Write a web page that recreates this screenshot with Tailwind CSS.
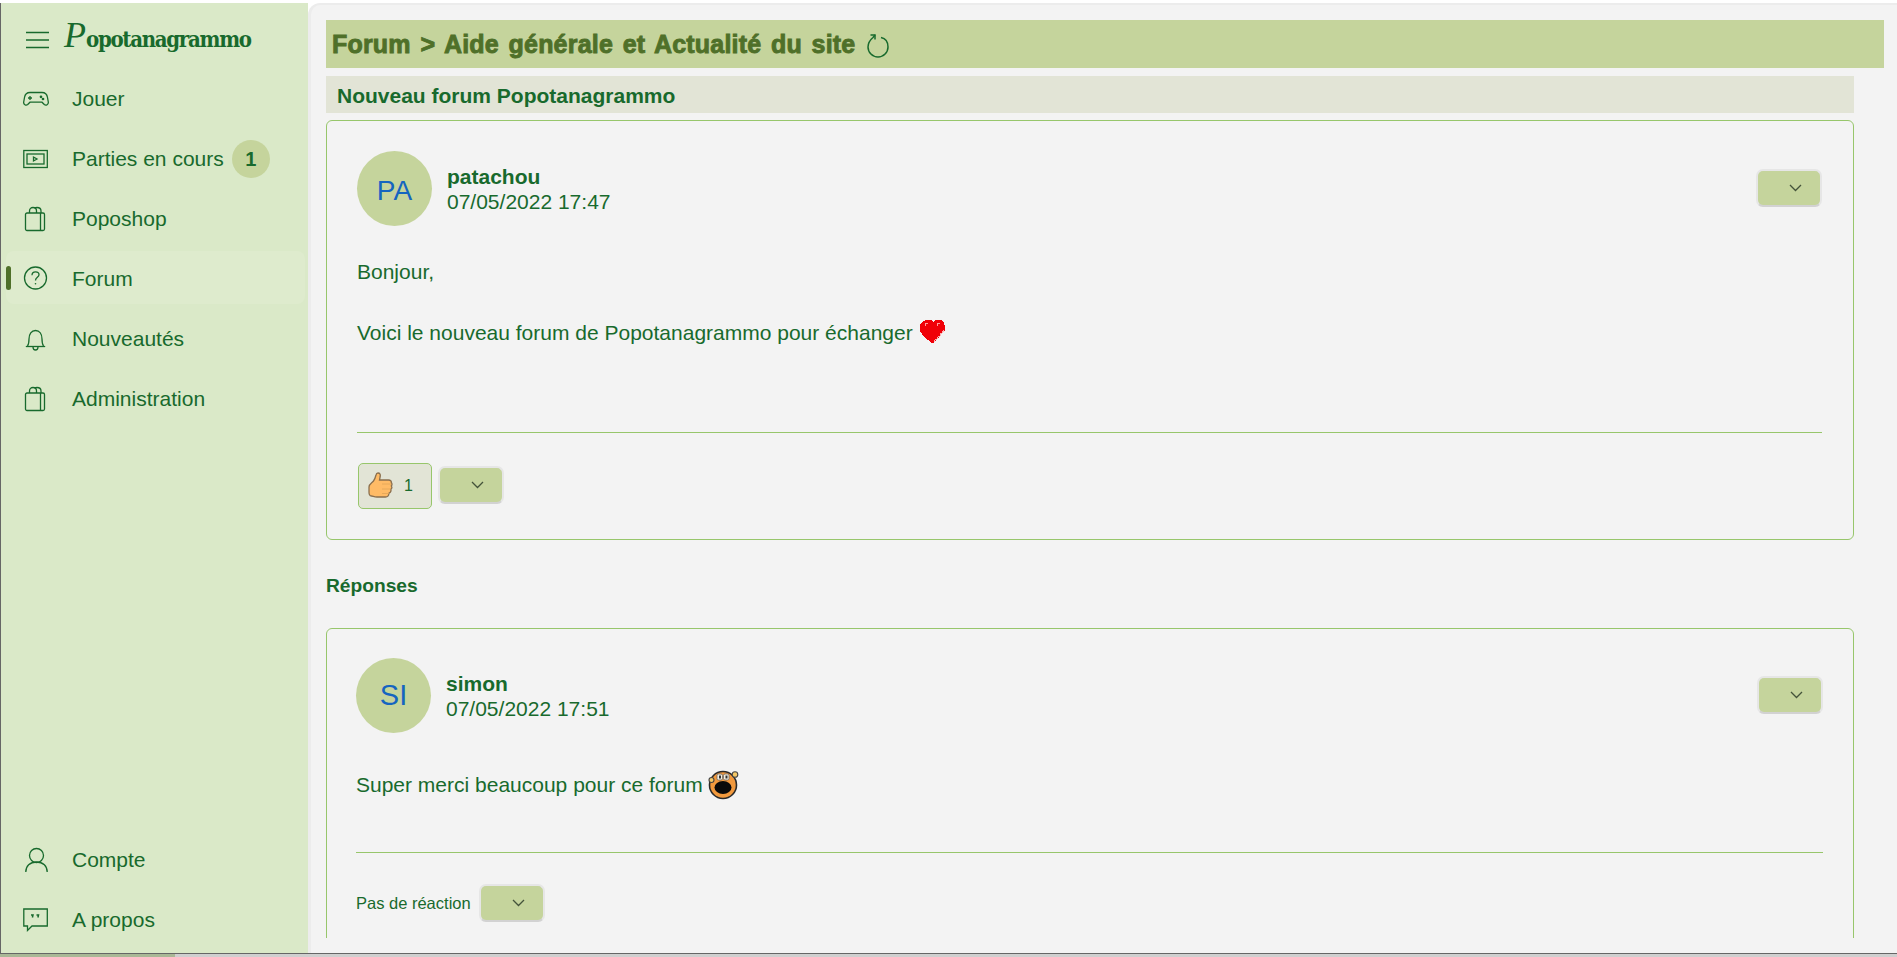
<!DOCTYPE html>
<html lang="fr">
<head>
<meta charset="utf-8">
<title>Forum</title>
<script src="https://cdn.jsdelivr.net/npm/@tailwindcss/browser@4"></script>
</head>
<body class="bg-white">
<div class="h-[957px] w-[1897px] overflow-hidden flex flex-col font-['Liberation_Sans',Arial,sans-serif] text-[#186a2d] text-[21px]">
  <div class="h-[3px] shrink-0 bg-white ml-px"></div>
  <div class="flex-1 min-h-0 flex border-l border-[#666]">
    <!-- Sidebar -->
    <aside class="w-[307px] shrink-0 bg-[#dae9c8] flex flex-col pb-[3px]">
      <div class="h-[66px] flex items-center pl-[25px] shrink-0">
        <svg class="w-[23px] h-[18px] mt-[7px]" viewBox="0 0 23 18" fill="none" stroke="#186a2d" stroke-width="1.3"><path d="M0 1.5h23M0 9h23M0 16.5h23"/></svg>
        <div class="ml-[15px] flex items-baseline mt-[2px]">
          <span class="font-['Liberation_Serif',serif] italic text-[36px] leading-[40px]">P</span><span class="font-['DejaVu_Serif',serif] font-stretch-condensed font-bold text-[22px] leading-[40px] tracking-[-1.300px]">opotanagrammo</span>
        </div>
      </div>
      <a class="h-[60px] flex items-center pl-[22px] shrink-0">
        <svg class="w-[26px] h-[26px] mr-[23px]" viewBox="0 0 26 26" fill="none" stroke="#186a2d" stroke-width="1.3"><path d="M7 6.500h12c3 0 5 2 5.500 5l.8 4.500c.4 2.500-2.300 4-4 2.500l-2.300-2.300H7l-2.300 2.300c-1.700 1.500-4.400 0-4-2.500l.8-4.500C2 8.500 4 6.500 7 6.500z"/><path d="M5 12h4M7 10v4"/><circle cx="18" cy="10.800" r=".7" fill="#186a2d"/><circle cx="20" cy="13" r=".7" fill="#186a2d"/></svg>
        <span>Jouer</span>
      </a>
      <a class="h-[60px] flex items-center pl-[22px] shrink-0">
        <svg class="w-[26px] h-[26px] mr-[23px]" viewBox="0 0 26 26" fill="none" stroke="#186a2d" stroke-width="1.3"><rect x=".8" y="4.500" width="23.500" height="17"/><rect x="4" y="8" width="17" height="10"/><path d="M10.500 11v4l3.500-2z"/></svg>
        <span>Parties en cours</span>
        <span class="ml-[8px] w-[38px] h-[38px] rounded-full bg-[#c5d49c] flex items-center justify-center font-bold text-[20px]">1</span>
      </a>
      <a class="h-[60px] flex items-center pl-[23px] shrink-0">
        <svg class="w-[26px] h-[26px] mr-[22px]" viewBox="0 0 26 26" fill="none" stroke="#186a2d" stroke-width="1.3"><rect x="1.500" y="7" width="19" height="17.500" rx="1.500"/><path d="M16.500 7v17.500"/><path d="M5.500 7V5C5.500 2.700 7 1.500 9 1.500s3.500 1.200 3.500 3.500v2"/><path d="M10.500 2c.8-.4 1.800-.5 2.500-.5 2.500 0 4 1.500 4 3.500v2"/></svg>
        <span>Poposhop</span>
      </a>
      <a class="h-[53px] mt-[2px] mb-[5px] ml-[5px] mr-[3px] pl-0 flex items-center bg-[#deebcd] rounded-lg shrink-0">
        <span class="w-[5px] h-[24px] rounded-full bg-[#4f7029] mr-[12px]"></span>
        <svg class="w-[26px] h-[26px] mr-[23px]" viewBox="0 0 26 26" fill="none" stroke="#186a2d" stroke-width="1.3"><circle cx="12.500" cy="13" r="11"/><path d="M9 10.300c0-2.300 1.600-3.500 3.600-3.500s3.400 1.300 3.400 3c0 2.500-3.500 2.700-3.500 5.700"/><circle cx="12.500" cy="18.800" r=".8" fill="#186a2d" stroke="none"/></svg>
        <span class="mt-[2px]">Forum</span>
      </a>
      <a class="h-[60px] flex items-center pl-[22px] shrink-0">
        <svg class="w-[26px] h-[26px] mr-[23px]" viewBox="0 0 26 26" fill="none" stroke="#186a2d" stroke-width="1.3"><path d="M4.500 20c1.500-2 1.500-3.500 1.500-7 0-5 2.500-8.500 6.500-8.500S19 8 19 13c0 3.500 0 5 1.500 7"/><path d="M2.800 20.500h19.400"/><path d="M10 21c0 1.700 1 3 2.500 3s2.500-1.300 2.500-3"/></svg>
        <span>Nouveautés</span>
      </a>
      <a class="h-[60px] flex items-center pl-[23px] shrink-0">
        <svg class="w-[26px] h-[26px] mr-[22px]" viewBox="0 0 26 26" fill="none" stroke="#186a2d" stroke-width="1.3"><rect x="1.500" y="7" width="19" height="17.500" rx="1.500"/><path d="M16.500 7v17.500"/><path d="M5.500 7V5C5.500 2.700 7 1.500 9 1.500s3.500 1.200 3.500 3.500v2"/><path d="M10.500 2c.8-.4 1.800-.5 2.500-.5 2.500 0 4 1.500 4 3.500v2"/></svg>
        <span>Administration</span>
      </a>
      <div class="flex-1"></div>
      <a class="h-[60px] flex items-center pl-[23px] shrink-0">
        <svg class="w-[26px] h-[26px] mr-[22px]" viewBox="0 0 26 26" fill="none" stroke="#186a2d" stroke-width="1.3"><circle cx="12.500" cy="8.500" r="7"/><path d="M1.800 25c0-6 4-10 10.700-10s10.700 4 10.700 10"/></svg>
        <span>Compte</span>
      </a>
      <a class="h-[60px] flex items-center pl-[22px] shrink-0">
        <svg class="w-[26px] h-[26px] mr-[23px]" viewBox="0 0 26 26" fill="none" stroke="#186a2d" stroke-width="1.3"><path d="M.8 2h23.500v17H9l-4.500 4.500V19H.8z"/><path d="M8 8h2l-.6 2.500M13.500 8h2l-.6 2.500" stroke-width="1.500"/></svg>
        <span>A propos</span>
      </a>
    </aside>
    <!-- Main -->
    <main class="flex-1 min-w-0 bg-[#f3f3f3] rounded-tl-[12px] border-l-[3px] border-t-[2px] border-[#ececec] pl-[15px] pr-[13px] pt-[15px] pb-[15px] flex flex-col">
      <div class="h-[48px] shrink-0 bg-[#c5d49c] flex items-center pl-[6px] text-[#4f7029]">
        <h1 class="font-bold text-[25px] leading-[32px] [-webkit-text-stroke:0.9px_#4f7029] tracking-[0.2px] [word-spacing:2.500px] whitespace-pre">Forum &gt; Aide générale et Actualité du site</h1>
        <svg class="w-[24px] h-[26px] ml-[12px] mt-[3px]" viewBox="0 0 24 26" fill="none" stroke="#186a2d" stroke-width="1.500"><path d="M14 4.500c4.300.9 7 4.700 7 9.500 0 5.500-4.500 10-10 10S1 19.500 1 14c0-4 2-7 5-9.500L8 2"/><path d="M3.500 2H8v4.500"/></svg>
      </div>
      <div class="h-[37px] mt-[8px] mr-[30px] shrink-0 bg-[#e2e4d6] flex items-center pl-[11px] pt-[2px]">
        <h2 class="font-bold text-[21px]">Nouveau forum Popotanagrammo</h2>
      </div>
      <article class="mt-[7px] mr-[30px] h-[420px] shrink-0 border border-[#97c66b] rounded-[6px] pl-[30px] pr-[31px] pt-[30px]">
        <header class="flex justify-between items-start">
          <div class="flex items-center">
            <div class="w-[75px] h-[75px] pt-[5px] rounded-full bg-[#c5d49c] flex items-center justify-center text-[#1565c0] text-[28px]">PA</div>
            <div class="ml-[15px] leading-[25px]">
              <div class="font-bold">patachou</div>
              <div>07/05/2022 17:47</div>
            </div>
          </div>
          <button class="w-[66px] h-[38px] mt-[18px] border-2 border-[#e6e6e6] border-b-[#d2d2d2] rounded-[7px] bg-[#c5d49c] flex items-center justify-end pr-[18px]">
            <svg class="w-[13px] h-[8px]" viewBox="0 0 13 8" fill="none" stroke="#44533a" stroke-width="1.300"><path d="M1 1l5.500 5.500L12 1"/></svg>
          </button>
        </header>
        <div class="mt-[31px] leading-[30.500px]">
          <p>Bonjour,</p>
          <p class="mt-[30.500px] flex items-center">Voici le nouveau forum de Popotanagrammo pour échanger
            <svg class="w-[26px] h-[25px] ml-[7px] -mt-[4px]" viewBox="0 0 26 25" shape-rendering="crispEdges"><path d="M6 1h5l2 2 2-2h6l3 3v2l1 1v4l-2 3-2 1v2l-2 1-1 2-2 1-1 2-2 1h-2l-3-3-2-1-1-2-2-1-1-2-2-2V5l2-2z" fill="#f00008"/><path d="M5 4h3v1H6v2H5zM17 4h3v1h-2v2h-1z" fill="#ff9a9a"/><path d="M24 11l-2 3-2 1v2l-2 1-1 2-2 1-1 2" fill="none" stroke="#f7b4b4" stroke-width="1"/></svg>
          </p>
        </div>
        <div class="h-px bg-[#97c66b] mt-[83px]"></div>
        <div class="mt-[30px] flex items-center">
          <button class="w-[74px] h-[46px] ml-px border border-[#97c66b] rounded-[5px] bg-[#e2e4d6] flex items-center pl-[9px]">
            <svg class="w-[25px] h-[27px] -mt-[1px]" viewBox="0 0 25 27"><path d="M10 1c2 0 2.500 1.500 2.200 3.500L11.500 8h9c2 0 3 1 2.800 2.500.9.800.9 2.500 0 3.500.7 1 .5 2.500-.5 3.200.5 1.500 0 3.500-1.800 4-.2 2-1.500 3.800-3.500 3.800H9c-3 0-4-1-5.500-1C1.500 24 1 22 1 20v-5c0-3 3-4 4.500-6 1.500-2 2-4 2.500-6 .2-1 1-2 2-2z" fill="#ffbb66" stroke="#8a6f4e" stroke-width="1.300"/><path d="M14 12h9M14 17h9M14 21.500h7" stroke="#e0a458" stroke-width=".8" fill="none"/></svg>
            <span class="ml-[11px] text-[16px]">1</span>
          </button>
          <button class="w-[66px] h-[38px] ml-[6px] -mt-[2px] border-2 border-[#e6e6e6] border-b-[#d2d2d2] rounded-[7px] bg-[#c5d49c] flex items-center justify-end pr-[18px]">
            <svg class="w-[13px] h-[8px]" viewBox="0 0 13 8" fill="none" stroke="#44533a" stroke-width="1.300"><path d="M1 1l5.500 5.500L12 1"/></svg>
          </button>
        </div>
      </article>
      <h3 class="font-bold text-[19.200px] leading-[28px] mt-[32px] mb-[28px] shrink-0">Réponses</h3>
      <div class="flex-1 min-h-0 overflow-hidden mr-[30px]">
        <article class="border border-[#97c66b] rounded-[6px] pl-[29px] pr-[30px] pt-[29px] pb-[30px]">
          <header class="flex justify-between items-start">
            <div class="flex items-center">
              <div class="w-[75px] h-[75px] rounded-full bg-[#c5d49c] flex items-center justify-center text-[#1565c0] text-[29px]">SI</div>
              <div class="ml-[15px] leading-[25px]">
                <div class="font-bold">simon</div>
                <div>07/05/2022 17:51</div>
              </div>
            </div>
            <button class="w-[66px] h-[38px] mt-[18px] border-2 border-[#e6e6e6] border-b-[#d2d2d2] rounded-[7px] bg-[#c5d49c] flex items-center justify-end pr-[18px]">
              <svg class="w-[13px] h-[8px]" viewBox="0 0 13 8" fill="none" stroke="#44533a" stroke-width="1.300"><path d="M1 1l5.500 5.500L12 1"/></svg>
            </button>
          </header>
          <p class="mt-[37px] leading-[30px] flex items-center">Super merci beaucoup pour ce forum
            <svg class="w-[31px] h-[31px] ml-[5px] -mt-[2px]" viewBox="0 0 31 31"><circle cx="15" cy="16" r="13.500" fill="#f2993d" stroke="#2a2a2a" stroke-width="1.600"/><circle cx="27" cy="5.500" r="2.800" fill="#f4c866" stroke="#444" stroke-width="1.100"/><circle cx="3.500" cy="11" r="2.500" fill="#f4c866" stroke="#444" stroke-width="1.100"/><rect x="9" y="5" width="5.500" height="6" rx="1.500" fill="#f5efe0" stroke="#666" stroke-width=".8"/><rect x="15.500" y="5" width="5.500" height="6" rx="1.500" fill="#f5efe0" stroke="#666" stroke-width=".8"/><rect x="11" y="6.500" width="2" height="3" fill="#333"/><rect x="17.500" y="6.500" width="2" height="3" fill="#333"/><ellipse cx="15" cy="18.500" rx="8.500" ry="6.500" fill="#0a0a0a"/></svg>
          </p>
          <div class="h-px bg-[#97c66b] mt-[52px]"></div>
          <div class="mt-[31px] flex items-center">
            <span class="text-[16.500px]">Pas de réaction</span>
            <button class="w-[66px] h-[38px] ml-[8px] border-2 border-[#e6e6e6] border-b-[#d2d2d2] rounded-[7px] bg-[#c5d49c] flex items-center justify-end pr-[18px]">
              <svg class="w-[13px] h-[8px]" viewBox="0 0 13 8" fill="none" stroke="#44533a" stroke-width="1.300"><path d="M1 1l5.500 5.500L12 1"/></svg>
            </button>
          </div>
        </article>
      </div>
    </main>
  </div>
  <div class="h-px shrink-0 bg-[#666]"></div>
  <div class="h-[3px] shrink-0 flex bg-[#cfcfcf]"><div class="w-[175px] bg-[#a9b896]"></div></div>
</div>
</body>
</html>
